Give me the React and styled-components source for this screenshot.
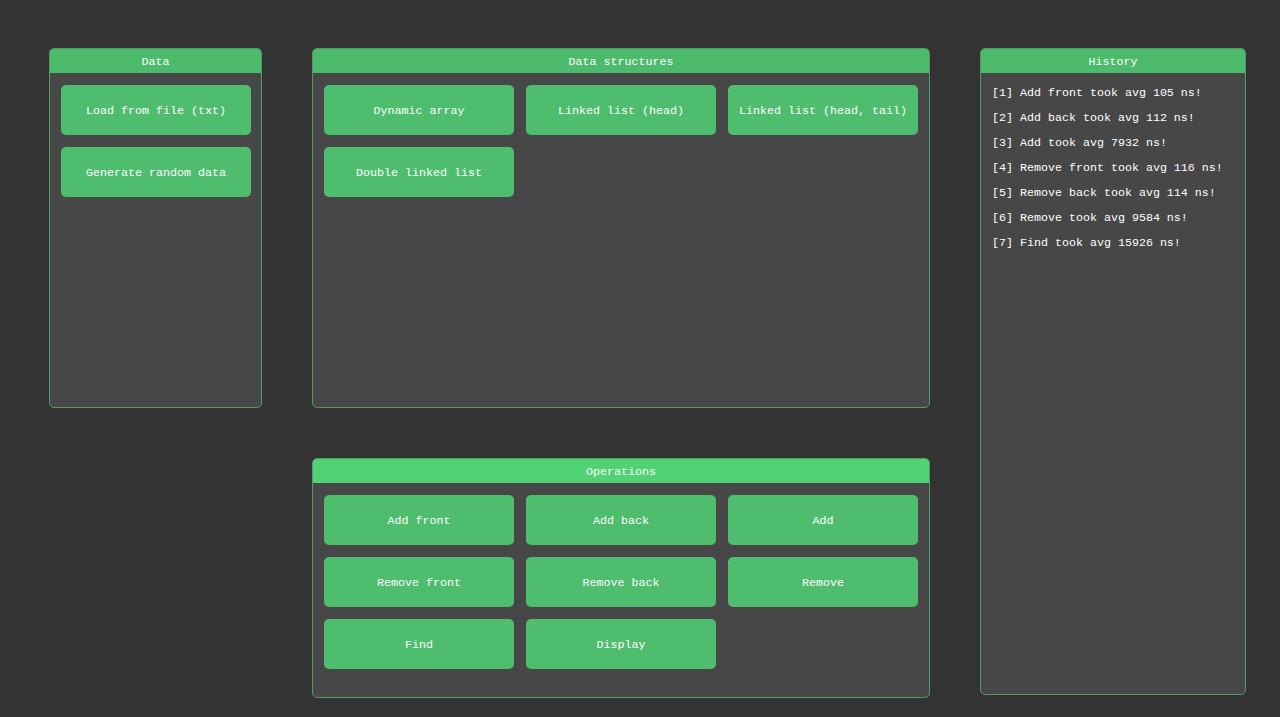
import React from 'react';
import styled, { createGlobalStyle } from 'styled-components';

const Global = createGlobalStyle`
  html, body {
    margin: 0;
    padding: 0;
    background: #333333;
    height: 100%;
  }
  #root {
    height: 717px;
  }
`;

const Desktop = styled.div`
  position: relative;
  width: 1280px;
  height: 717px;
  background: #333333;
  overflow: hidden;
  font-family: "Liberation Mono", "DejaVu Sans Mono", monospace;
  font-size: 11.67px;
  color: #ffffff;
`;

// imgui-style floating window, placed on the canvas
const Window = styled.div`
  position: absolute;
  left: ${p => p.x}px;
  top: ${p => p.y}px;
  width: ${p => p.w}px;
  height: ${p => p.h}px;
  box-sizing: border-box;
  background: #474747;
  border: 1px solid #4f9d65;
  border-radius: 5px;
  display: flex;
  flex-direction: column;
  overflow: hidden;
`;

const TitleBar = styled.div`
  flex: none;
  height: 25px;
  box-sizing: border-box;
  margin: -1px -1px 0 -1px;
  padding-top: 3px;
  background: ${p => (p.active ? '#51d375' : '#4dbb6c')};
  display: flex;
  align-items: center;
  justify-content: center;
  line-height: 13px;
`;

const Body = styled.div`
  padding: 12px 11px 11px;
  display: grid;
  grid-template-columns: repeat(${p => p.cols}, 190px);
  gap: 12px;
  align-content: start;
`;

const Button = styled.button`
  width: 190px;
  height: 50px;
  border: none;
  border-radius: 5px;
  background: #4ebd6e;
  color: #ffffff;
  font-family: inherit;
  font-size: inherit;
  padding: 2px 0 0;
  cursor: pointer;
  &:hover {
    background: #55c876;
  }
`;

const Log = styled.div`
  padding: 14px 11px 11px;
  display: flex;
  flex-direction: column;
  gap: 12px;
`;

const LogLine = styled.div`
  line-height: 13px;
  white-space: pre;
`;

const history = [
  '[1] Add front took avg 105 ns!',
  '[2] Add back took avg 112 ns!',
  '[3] Add took avg 7932 ns!',
  '[4] Remove front took avg 116 ns!',
  '[5] Remove back took avg 114 ns!',
  '[6] Remove took avg 9584 ns!',
  '[7] Find took avg 15926 ns!',
];

export default function App() {
  return (
    <>
      <Global />
      <Desktop>
        <Window x={49} y={48} w={213} h={360}>
          <TitleBar>Data</TitleBar>
          <Body cols={1}>
            <Button>Load from file (txt)</Button>
            <Button>Generate random data</Button>
          </Body>
        </Window>

        <Window x={312} y={48} w={618} h={360}>
          <TitleBar>Data structures</TitleBar>
          <Body cols={3}>
            <Button>Dynamic array</Button>
            <Button>Linked list (head)</Button>
            <Button>Linked list (head, tail)</Button>
            <Button>Double linked list</Button>
          </Body>
        </Window>

        <Window x={312} y={458} w={618} h={240}>
          <TitleBar active>Operations</TitleBar>
          <Body cols={3}>
            <Button>Add front</Button>
            <Button>Add back</Button>
            <Button>Add</Button>
            <Button>Remove front</Button>
            <Button>Remove back</Button>
            <Button>Remove</Button>
            <Button>Find</Button>
            <Button>Display</Button>
          </Body>
        </Window>

        <Window x={980} y={48} w={266} h={647}>
          <TitleBar>History</TitleBar>
          <Log>
            {history.map(line => (
              <LogLine key={line}>{line}</LogLine>
            ))}
          </Log>
        </Window>
      </Desktop>
    </>
  );
}
